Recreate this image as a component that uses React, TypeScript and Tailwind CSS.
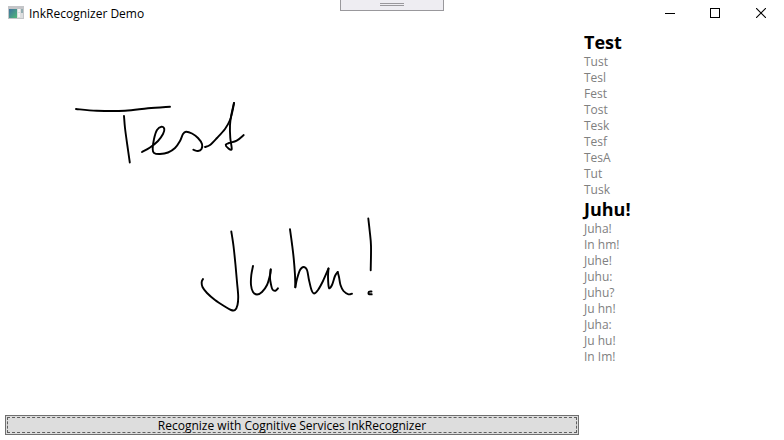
const results = [
  { word: 'Test', alternates: ['Tust', 'Tesl', 'Fest', 'Tost', 'Tesk', 'Tesf', 'TesA', 'Tut', 'Tusk'] },
  { word: 'Juhu!', alternates: ['Juha!', 'In hm!', 'Juhe!', 'Juhu:', 'Juhu?', 'Ju hn!', 'Juha:', 'Ju hu!', 'In Im!'] },
];

type Point = [number, number];

// Each ink stroke is the list of pen positions, drawn as a smooth curve.
const strokes: Point[][] = [
  [[76, 109], [96.7, 110.7], [125, 110.7], [148, 108.3], [170, 106.7]],
  [[124, 116], [125, 128], [127.3, 145], [129.8, 162.5]],
  [[142, 152], [150, 147.5], [158, 141], [163, 134], [164.3, 129], [161.5, 126.7], [157, 130], [154, 139], [152.7, 149], [154, 153], [160, 154], [168, 152.5], [175, 148], [180, 141], [183, 134], [186, 131.7], [192, 133.5], [198, 138], [202, 144], [201.5, 149], [198, 151], [193.3, 149.7]],
  [[205, 147], [210, 145], [217, 138], [225, 129], [230, 120], [232.5, 111], [234, 103]],
  [[234, 103], [231.5, 114], [230, 125], [230.3, 138], [231.7, 149.3], [228, 148], [225.7, 144.8], [229, 143], [236.7, 140.7], [243.7, 135]],
  [[231.3, 231.5], [233.5, 246], [235.5, 265], [237, 282], [238.2, 296], [237.5, 305], [235, 310], [231, 310], [224, 306], [215, 300], [207, 293], [202.5, 287], [201.7, 282], [203, 279]],
  [[253, 266], [251.3, 275], [251, 285], [253, 292], [257, 294.5], [262, 292], [267, 285], [270, 275], [270.7, 269.5]],
  [[270.7, 269.5], [270, 278], [271, 284.5], [272.5, 289.5], [275.5, 290.7], [278, 288.3]],
  [[290, 229.3], [292, 244], [293.7, 258.3], [295, 275], [295.3, 287.3]],
  [[295.3, 287.3], [297, 279], [300, 270], [303.5, 267], [307, 270], [309, 280], [311.5, 290], [314, 293.5], [318, 290], [323, 281], [328.5, 268.5]],
  [[328.5, 268.5], [328, 277], [329, 288], [332, 285], [335, 276], [337.7, 272]],
  [[337.7, 272], [339, 277], [340.5, 285], [343.5, 291], [348.5, 294.3], [352, 293.7]],
  [[368.3, 218.5], [369.7, 231], [371, 246], [370.7, 270.3]],
  [[371.5, 291.5], [369, 291.7], [368.7, 294], [371.7, 294.3]],
];

function smoothPath(points: Point[]) {
  let d = `M${points[0][0]} ${points[0][1]}`;
  for (let i = 0; i < points.length - 1; i++) {
    const before = points[i - 1] ?? points[i];
    const from = points[i];
    const to = points[i + 1];
    const after = points[i + 2] ?? to;
    d += ` C${from[0] + (to[0] - before[0]) / 6} ${from[1] + (to[1] - before[1]) / 6}`;
    d += ` ${to[0] - (after[0] - from[0]) / 6} ${to[1] - (after[1] - from[1]) / 6}`;
    d += ` ${to[0]} ${to[1]}`;
  }
  return d;
}

function AppIcon() {
  return (
    <svg width="16" height="14" viewBox="0 0 16 14" aria-hidden="true">
      <defs>
        <linearGradient id="screen" x1="0" y1="0" x2="1" y2="1">
          <stop offset="0" stopColor="#3f72a0" />
          <stop offset="1" stopColor="#50b878" />
        </linearGradient>
      </defs>
      <path d="M0 0h16v13H0z" fill="#c4c5c8" />
      <path d="M1 3h8v9H1z" fill="url(#screen)" />
      <path d="M9 3h6v9H9z" fill="#dcdedf" />
      <path d="M10 3h2v3h-2zM10 7h2v4h-2z" fill="#f5f5f5" />
      <path d="M13 3h2v4h-2z" fill="#92acb0" />
    </svg>
  );
}

const captionButton = 'flex h-full w-[46px] items-center justify-center hover:bg-gray-200';

export default function App() {
  return (
    <div className="relative flex min-h-screen flex-col bg-white font-['Open_Sans','Noto_Sans',sans-serif] text-[12px] leading-[16px] text-black">
      <header className="flex h-[26px] items-center justify-between">
        <div className="flex items-center gap-[5px] pl-2">
          <AppIcon />
          <h1 className="pt-0.5">InkRecognizer Demo</h1>
        </div>
        <div className="flex h-full">
          <button type="button" aria-label="Minimize" className={captionButton}>
            <svg width="12" height="10" shapeRendering="crispEdges"><path d="M2 5h10v1H2z" /></svg>
          </button>
          <button type="button" aria-label="Maximize" className={captionButton}>
            <svg width="10" height="10" shapeRendering="crispEdges"><path d="M.5.5h9v9h-9z" fill="none" stroke="black" /></svg>
          </button>
          <button type="button" aria-label="Close" className={captionButton}>
            <svg width="10" height="10"><path d="M0 0l10 10M10 0L0 10" stroke="black" strokeWidth="1.1" /></svg>
          </button>
        </div>
      </header>

      <button
        type="button"
        aria-label="Show toolbar"
        className="absolute top-0 left-1/2 flex h-[11px] w-[104px] -translate-x-1/2 flex-col items-center gap-px border border-t-0 border-[#99989c] bg-[#eeedf2] pt-[3px]"
      >
        <span className="h-px w-6 bg-[#99989c]" />
        <span className="h-px w-6 bg-[#99989c]" />
      </button>

      <main className="flex flex-1">
        <section className="flex min-w-0 flex-1 flex-col px-[5px] pb-[5px]">
          <div className="flex-1">
            <svg className="w-full" viewBox="5 26 574 380" role="img" aria-label="Handwritten ink">
              <g fill="none" stroke="black" strokeWidth="1.9" strokeLinecap="round" strokeLinejoin="round">
                {strokes.map((points, index) => <path key={index} d={smoothPath(points)} />)}
              </g>
            </svg>
          </div>
          <button type="button" className="h-5 border border-[#707070] bg-[#dddddd] p-px">
            <span className="flex h-full items-center justify-center border border-dashed border-[#606060] pt-0.5">
              Recognize with Cognitive Services InkRecognizer
            </span>
          </button>
        </section>
        <aside className="w-[200px] pt-[5px]">
          {results.map(({ word, alternates }) => (
            <section key={word}>
              <h2 className="text-[18px] leading-[23px] font-bold">{word}</h2>
              <ul className="text-[#808080]">
                {alternates.map((text) => <li key={text}>{text}</li>)}
              </ul>
            </section>
          ))}
        </aside>
      </main>
    </div>
  );
}
